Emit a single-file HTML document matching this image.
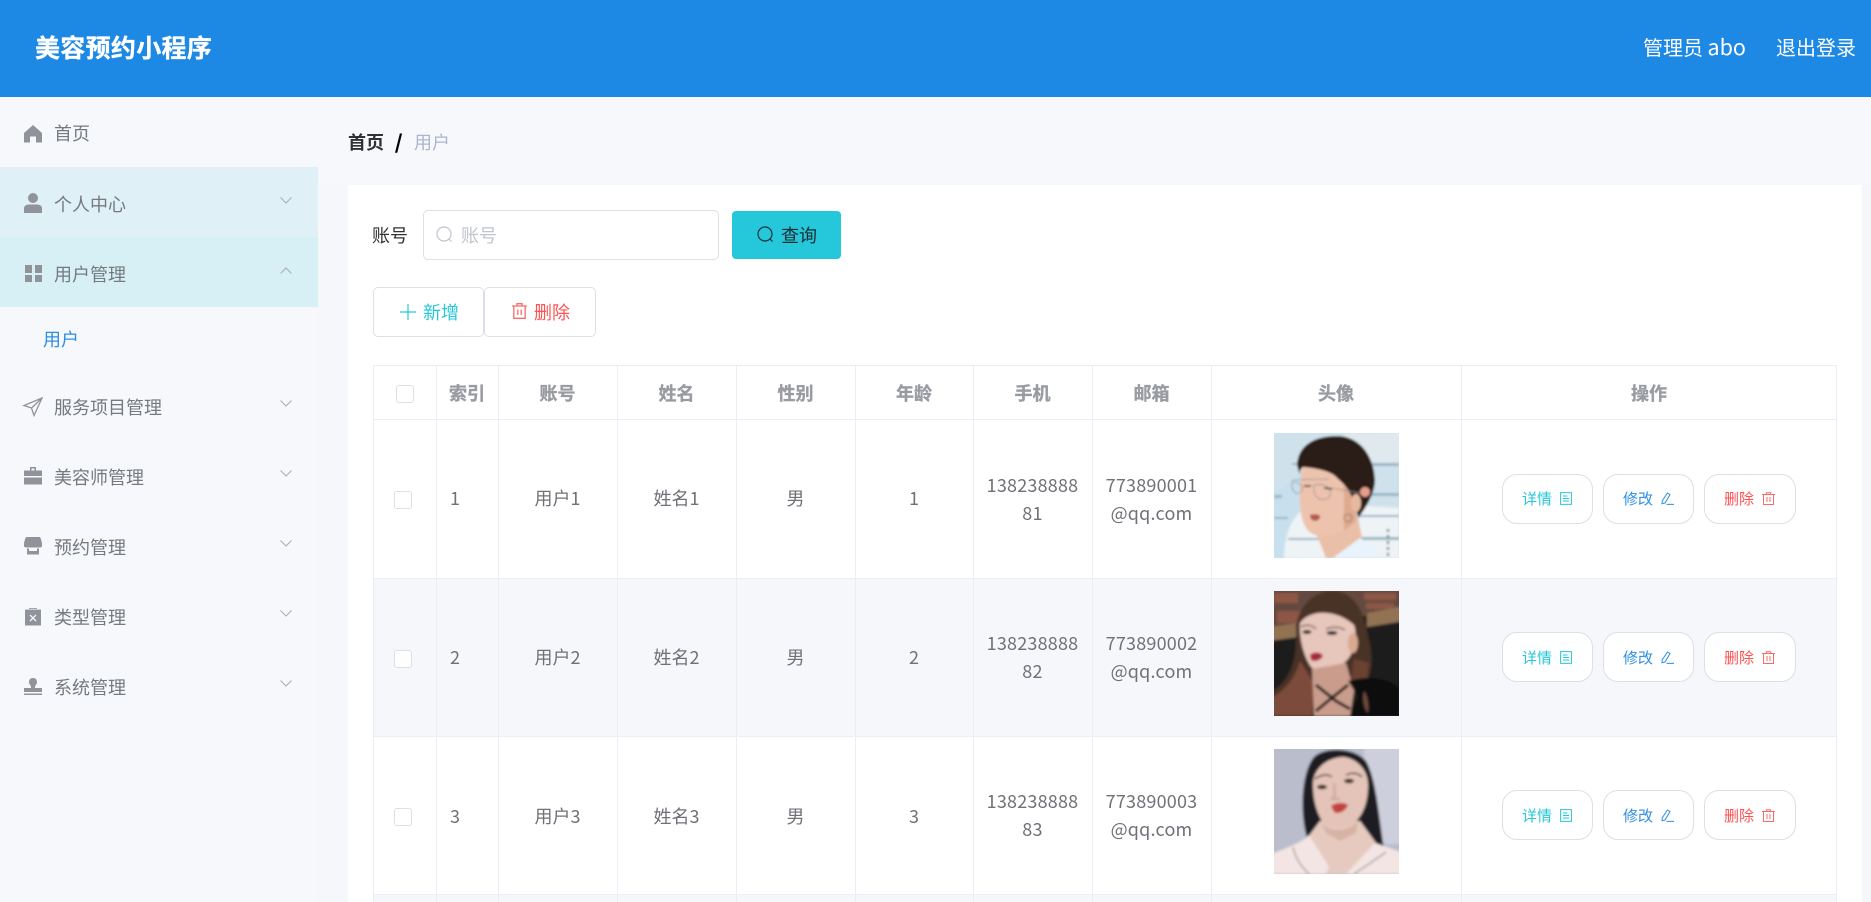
<!DOCTYPE html>
<html lang="zh-CN">
<head>
<meta charset="utf-8">
<title>美容预约小程序</title>
<style>
*{box-sizing:border-box;margin:0;padding:0}
html,body{width:1871px;height:902px;overflow:hidden;background:#f5f7fb}
body{position:relative;font-family:"Noto Sans CJK SC","Liberation Sans",sans-serif;color:#606266;font-size:18px;font-weight:400}
.a{position:absolute}
.t{position:absolute;white-space:nowrap;line-height:28px;height:28px}
.c{position:absolute;text-align:center;white-space:nowrap;line-height:28px}
svg{position:absolute;display:block;overflow:visible}
.hdr{left:0;top:0;width:1871px;height:97px;background:#1e88e5}
.side{left:0;top:97px;width:318px;height:805px;background:#f6f8fb}
.m{position:absolute;left:54px;font-size:18px;color:#757a80;line-height:28px;white-space:nowrap}
.ic{fill:#909399}
.ch{fill:none;stroke:#a9adb3;stroke-width:1}
.panel{left:348px;top:185px;width:1514px;height:717px;background:#fff}
.vl{position:absolute;top:0;width:1px;background:#ebeef5}
.btn{position:absolute;height:50px;border:1px solid #dcdfe6;background:#fff}
.th{position:absolute;top:368px;height:50px;line-height:50px;text-align:center;font-weight:700;font-size:18px;color:#989ba1;white-space:nowrap;-webkit-text-stroke:.35px #989ba1}
.row{position:absolute;left:373px;width:1464px}
.rb{position:absolute;top:55px;width:91px;height:50px;border:1px solid #dcdfe6;border-radius:15px;background:#fff}
.row .c{color:#6f7177;font-size:18px}
.row .n{letter-spacing:.2px}
.cb{position:absolute;width:18px;height:18px;border:1px solid #dcdfe6;border-radius:3px;background:#fff}
.lb{position:absolute;font-size:15px;line-height:22px;white-space:nowrap}
</style>
</head>
<body>

<div class="a" style="left:318px;top:97px;width:1553px;height:88px;background:#f7f8fb"></div>
<div class="a hdr"></div>
<div class="t" style="left:35px;top:29px;height:36px;line-height:36px;font-size:25px;font-weight:700;letter-spacing:.3px;color:#fff;-webkit-text-stroke:.3px #fff">美容预约小程序</div>
<div class="t" style="left:1643px;top:33px;font-size:20px;color:#fff">管理员 <span style="font-size:21.500px">abo</span></div>
<div class="t" style="left:1776px;top:33px;font-size:20px;color:#fff">退出登录</div>

<div class="a side"></div>
<div class="a" style="left:0;top:167px;width:318px;height:70px;background:#dff1f7"></div>
<div class="a" style="left:0;top:237px;width:318px;height:70px;background:#d7f0f5"></div>

<svg width="18" height="18" viewBox="0 0 18 18" style="left:24px;top:125px"><path class="ic" d="M9 0L18 8V17.500H12V11.500H6V17.500H0V8Z"/></svg>
<div class="m" style="top:119px">首页</div>

<svg width="18" height="20" viewBox="0 0 18 20" style="left:24px;top:193px"><circle class="ic" cx="9" cy="5" r="5"/><path class="ic" d="M0 20V15.500C0 13 2 11.500 5 11.500H13C16 11.500 18 13 18 15.500V20Z"/></svg>
<div class="m" style="top:190px">个人中心</div>
<svg width="12" height="7" style="left:280px;top:197px"><path class="ch" d="M.5.500L6 6 11.500.500"/></svg>

<svg width="18" height="18" viewBox="0 0 18 18" style="left:24px;top:265px"><path class="ic" d="M1 0H8V8H1ZM11 0H18V8H11ZM1 10H8V17H1ZM11 10H18V17H11Z"/></svg>
<div class="m" style="top:260px">用户管理</div>
<svg width="12" height="7" style="left:280px;top:267px"><path class="ch" d="M.5 6.500L6 1 11.500 6.500"/></svg>

<div class="m" style="left:43px;top:325px;color:#2d8fe6">用户</div>

<svg width="20" height="20" viewBox="0 0 20 20" style="left:23px;top:397px"><path d="M19 1L1 8.500 8.500 11 11 18.500Z M8.500 11L19 1" fill="none" stroke="#909399" stroke-width="1.300"/></svg>
<div class="m" style="top:393px">服务项目管理</div>
<svg width="12" height="7" style="left:280px;top:400px"><path class="ch" d="M.5.500L6 6 11.500.500"/></svg>

<svg width="18" height="18" viewBox="0 0 18 18" style="left:24px;top:467px"><path class="ic" d="M6 0H12V3.500H18V9H0V3.500H6ZM7.500 1.500V3.500H10.500V1.500ZM0 10.500H18V17.500H0Z"/></svg>
<div class="m" style="top:463px">美容师管理</div>
<svg width="12" height="7" style="left:280px;top:470px"><path class="ch" d="M.5.500L6 6 11.500.500"/></svg>

<svg width="18" height="18" viewBox="0 0 18 18" style="left:24px;top:537px"><path class="ic" d="M2 0H16C17 2 18 5 18 7V9C18 10 17 10.500 16 10.500H2C1 10.500 0 10 0 9V7C0 5 1 2 2 0ZM3 11.500H5V14H13V11.500H15V17.500H3Z"/></svg>
<div class="m" style="top:533px">预约管理</div>
<svg width="12" height="7" style="left:280px;top:540px"><path class="ch" d="M.5.500L6 6 11.500.500"/></svg>

<svg width="16" height="19" viewBox="0 0 16 19" style="left:25px;top:607px"><path class="ic" d="M0 2.500H4V1H12V2.500H16V18.500H0Z"/><path d="M5 8L11 14M11 8L5 14" stroke="#f5f7fb" stroke-width="1.300" fill="none"/><path d="M0 2.200H16" stroke="#f5f7fb" stroke-width=".8"/></svg>
<div class="m" style="top:603px">类型管理</div>
<svg width="12" height="7" style="left:280px;top:610px"><path class="ch" d="M.5.500L6 6 11.500.500"/></svg>

<svg width="18" height="18" viewBox="0 0 18 18" style="left:24px;top:678px"><path class="ic" d="M9 0C11.500 0 13 1.500 13 4C13 6 11.500 7 11 8.500V10H18V14H0V10H7V8.500C6.500 7 5 6 5 4C5 1.500 6.500 0 9 0ZM0 15.500H18V17H0Z"/></svg>
<div class="m" style="top:673px">系统管理</div>
<svg width="12" height="7" style="left:280px;top:680px"><path class="ch" d="M.5.500L6 6 11.500.500"/></svg>

<div class="t" style="left:348px;top:128px;font-weight:700;color:#303133">首页</div>
<div class="t" style="left:395px;top:128px;font-weight:700;font-size:19px;color:#000;-webkit-text-stroke:.4px #000">/</div>
<div class="t" style="left:414px;top:128px;color:#a8b6cf">用户</div>

<div class="a panel"></div>

<div class="t" style="left:372px;top:221px;color:#303133">账号</div>
<div class="a" style="left:423px;top:210px;width:296px;height:50px;border:1px solid #dcdfe6;border-radius:5px;background:#fff"></div>
<svg width="17" height="17" viewBox="0 0 17 17" style="left:436px;top:226px"><circle cx="8" cy="8" r="7" fill="none" stroke="#c0c4cc" stroke-width="1.200"/><path d="M13 13L15.500 15.500" stroke="#c0c4cc" stroke-width="1.200"/></svg>
<div class="t" style="left:461px;top:221px;color:#c0c4cc">账号</div>

<div class="a" style="left:732px;top:211px;width:109px;height:48px;background:#25c7da;border-radius:4px"></div>
<svg width="17" height="17" viewBox="0 0 17 17" style="left:757px;top:226px"><circle cx="8" cy="8" r="7" fill="none" stroke="#14303a" stroke-width="1.200"/><path d="M13 13L15.500 15.500" stroke="#14303a" stroke-width="1.200"/></svg>
<div class="t" style="left:781px;top:221px;color:#1c2b30">查询</div>

<div class="btn" style="left:373px;top:287px;width:111px;border-radius:5px"></div>
<svg width="16" height="16" viewBox="0 0 16 16" style="left:400px;top:304px"><path d="M8 0V16M0 8H16" stroke="#25c7da" stroke-width="1.200"/></svg>
<div class="t" style="left:423px;top:298px;color:#25c7da">新增</div>

<div class="btn" style="left:484px;top:287px;width:112px;border-radius:5px"></div>
<svg width="15" height="16" viewBox="0 0 15 16" style="left:512px;top:303px"><path d="M0 3H15M5 3V.7H10V3M1.800 3V15.300H13.200V3M5.800 6.500V12M9.200 6.500V12" fill="none" stroke="#f56c6c" stroke-width="1.300"/></svg>
<div class="t" style="left:534px;top:298px;color:#ff5151">删除</div>

<!-- table head -->
<div class="a" style="left:373px;top:365px;width:1464px;height:55px;background:#fff;border:1px solid #ebeef5"></div>
<div class="cb" style="left:396px;top:385px"></div>
<div class="th" style="left:436px;width:62px">索引</div>
<div class="th" style="left:498px;width:119px">账号</div>
<div class="th" style="left:617px;width:119px">姓名</div>
<div class="th" style="left:736px;width:119px">性别</div>
<div class="th" style="left:855px;width:118px">年龄</div>
<div class="th" style="left:973px;width:119px">手机</div>
<div class="th" style="left:1092px;width:119px">邮箱</div>
<div class="th" style="left:1211px;width:250px">头像</div>
<div class="th" style="left:1461px;width:376px">操作</div>

<!-- row backgrounds -->
<div class="a" style="left:373px;top:578px;width:1464px;height:158px;background:#f5f7fb"></div>
<div class="a" style="left:373px;top:895px;width:1464px;height:7px;background:#f5f7fb"></div>
<div class="a" style="left:373px;top:578px;width:1464px;height:1px;background:#ebeef5"></div>
<div class="a" style="left:373px;top:736px;width:1464px;height:1px;background:#ebeef5"></div>
<div class="a" style="left:373px;top:894px;width:1464px;height:1px;background:#ebeef5"></div>

<!-- vertical lines -->
<div class="vl" style="left:373px;top:365px;height:537px"></div>
<div class="vl" style="left:436px;top:365px;height:537px"></div>
<div class="vl" style="left:498px;top:365px;height:537px"></div>
<div class="vl" style="left:617px;top:365px;height:537px"></div>
<div class="vl" style="left:736px;top:365px;height:537px"></div>
<div class="vl" style="left:855px;top:365px;height:537px"></div>
<div class="vl" style="left:973px;top:365px;height:537px"></div>
<div class="vl" style="left:1092px;top:365px;height:537px"></div>
<div class="vl" style="left:1211px;top:365px;height:537px"></div>
<div class="vl" style="left:1461px;top:365px;height:537px"></div>
<div class="vl" style="left:1836px;top:365px;height:537px"></div>

<!-- ROW 1 -->
<div class="row" style="top:419px;height:159px">
  <div class="cb" style="left:21px;top:72px"></div>
  <div class="c" style="left:77px;top:65px">1</div>
  <div class="c" style="left:125px;width:119px;top:65px">用户1</div>
  <div class="c" style="left:244px;width:119px;top:65px">姓名1</div>
  <div class="c" style="left:363px;width:119px;top:65px">男</div>
  <div class="c" style="left:482px;width:118px;top:65px">1</div>
  <div class="c n" style="left:600px;width:119px;top:52px">138238888<br>81</div>
  <div class="c n" style="left:719px;width:119px;top:52px">773890001<br>@qq.com</div>
  <svg width="125" height="125" viewBox="0 0 125 125" style="left:901px;top:14px">
    <defs><filter id="b1" x="-10%" y="-10%" width="120%" height="120%"><feGaussianBlur stdDeviation="1.100"/></filter>
    <clipPath id="k1"><rect width="125" height="125"/></clipPath></defs>
    <g clip-path="url(#k1)"><g filter="url(#b1)">
      <rect x="-5" y="-5" width="135" height="135" fill="#cfe2ec"/>
      <rect x="70" y="0" width="60" height="30" fill="#dfe9ee"/>
      <path d="M0 60L30 40 40 125H0Z" fill="#c8e0ee"/>
      <path d="M10 125C10 100 20 70 50 70L125 75V125Z" fill="#eef3f6"/>
      <path d="M90 30H125V33H90ZM95 60H125V63H95ZM85 82H125V84H85ZM18 30H25V32H18ZM0 62H8V65H0ZM0 84H14V86H0ZM14 105H50V107H14ZM80 104H125V107H80Z" fill="#9ab7c3"/>
      <path d="M40 95L84 84 92 125H52Z" fill="#eabfa7"/>
      <path d="M59 125L86 105C96 112 104 118 110 125Z" fill="#e8f3fb"/>
      <path d="M29 30L78 40 84 70 80 90C70 100 50 106 41 102 30 98 27 85 26 72 25 58 26 44 29 30Z" fill="#edc3ad"/>
      <path d="M70 50L84 60 82 88 70 98Z" fill="#dfa98f"/>
      <path d="M23 32C24 14 38 3 63 3 85 3 100 22 101 47 101 60 92 75 84 85L81 70 76 60C72 52 66 48 60 42 52 37 40 35 29 34 26 36 25 40 26 43Z" fill="#2b1c18"/>
      <path d="M36 82C42 80 50 82 44 87 40 89 36 87 36 82Z" fill="#b25a49"/>
      <ellipse cx="82" cy="70" rx="5" ry="9" fill="#e8b9a0"/>
      <circle cx="91" cy="59" r="5" fill="#e79d8d"/>
      <path d="M18 47L55 46M18 49C17 58 22 63 27 59 31 54 26 49 18 49M40 52C38 66 50 70 55 64 60 56 52 50 40 52ZM57 55L86 60" fill="none" stroke="#8a9096" stroke-width=".8"/>
      <path d="M30 53L37 53M50 55L58 56" stroke="#2a2220" stroke-width="1.500"/>
      <circle cx="74" cy="85" r="4" fill="none" stroke="#8a7060" stroke-width=".8"/>
      <path d="M114 96V125" stroke="#7f8f98" stroke-width="2.500" stroke-dasharray="3 3"/>
    </g></g>
  </svg>
  <div class="rb" style="left:1129px"></div>
  <div class="rb" style="left:1230px"></div>
  <div class="rb" style="left:1331px;width:92px"></div>
  <div class="lb" style="left:1149px;top:69px;color:#25c7da">详情</div>
  <svg width="12" height="13" viewBox="0 0 12 13" style="left:1187px;top:73px"><path d="M.6.6H11.400V12.400H.6ZM3 4H7.500M3 6.500H9M3 9H9" fill="none" stroke="#25c7da" stroke-width="1"/></svg>
  <div class="lb" style="left:1250px;top:69px;color:#2d8fe6">修改</div>
  <svg width="13" height="13" viewBox="0 0 13 13" style="left:1288px;top:73px"><path d="M6.500 1L9 2.500 4 11 1 11.700 1.300 8.700ZM5.500 12.400H13" fill="none" stroke="#2d8fe6" stroke-width="1"/></svg>
  <div class="lb" style="left:1351px;top:69px;color:#ff5151">删除</div>
  <svg width="13" height="13" viewBox="0 0 13 13" style="left:1389px;top:73px"><path d="M0 2.500H13M4.300 2.500V.7H8.700V2.500M1.500 2.500V12.500H11.500V2.500M5 5V10M8 5V10" fill="none" stroke="#f56c6c" stroke-width="1"/></svg>
</div>

<!-- ROW 2 -->
<div class="row" style="top:578px;height:158px">
  <div class="cb" style="left:21px;top:72px"></div>
  <div class="c" style="left:77px;top:65px">2</div>
  <div class="c" style="left:125px;width:119px;top:65px">用户2</div>
  <div class="c" style="left:244px;width:119px;top:65px">姓名2</div>
  <div class="c" style="left:363px;width:119px;top:65px">男</div>
  <div class="c" style="left:482px;width:118px;top:65px">2</div>
  <div class="c n" style="left:600px;width:119px;top:51px">138238888<br>82</div>
  <div class="c n" style="left:719px;width:119px;top:51px">773890002<br>@qq.com</div>
  <svg width="125" height="125" viewBox="0 0 125 125" style="left:901px;top:13px">
    <defs><filter id="b2" x="-10%" y="-10%" width="120%" height="120%"><feGaussianBlur stdDeviation="1.200"/></filter>
    <clipPath id="k2"><rect width="125" height="125"/></clipPath></defs>
    <g clip-path="url(#k2)"><g filter="url(#b2)">
      <rect x="-5" y="-5" width="135" height="135" fill="#1e1f1e"/>
      <path d="M-5 -5H130V20L-5 38Z" fill="#63493f"/>
      <path d="M0 2H24V12H0ZM3 20H28V32H3ZM90 2H122V9H90ZM92 12H120V18H92Z" fill="#8e5644"/>
      <path d="M-5 36L24 32V46L-5 50ZM93 22L130 15V30L93 36Z" fill="#917353"/>
      <path d="M-5 125V102C15 92 24 72 22 35 26 12 42 0 58 0 80 0 90 20 94 45 98 60 100 78 92 92L60 110 35 125Z" fill="#4a3028"/>
      <path d="M-5 125V108C12 100 22 85 26 70L40 92 38 125Z" fill="#7b4b3b"/>
      <path d="M80 68L95 72 92 96 76 98Z" fill="#6a4232"/>
      <path d="M26 32C36 18 62 18 80 34 84 46 80 60 74 68 62 82 46 84 37 76 29 64 25 46 26 32Z" fill="#e7c6bc"/>
      <ellipse cx="79" cy="52" rx="5" ry="10" fill="#d9a990"/>
      <path d="M38 78L72 72 80 100 76 125H40Z" fill="#c99c8c"/>
      <path d="M74 90C95 84 115 87 125 97V125H76L84 105Z" fill="#0e0b0f"/>
      <path d="M90 100C94 105 95 115 94 122 90 118 88 108 90 100Z" fill="#6e4a3e"/>
      <path d="M42 94L62 110 76 118M74 94L54 110 42 120" fill="none" stroke="#120d10" stroke-width="3"/>
      <path d="M27 36C32 33 38 34 42 38M52 38C60 35 66 36 71 39" stroke="#5a4038" stroke-width="1.300" fill="none"/>
      <ellipse cx="33" cy="41" rx="4.500" ry="2" fill="#2a1a18"/><ellipse cx="58" cy="42" rx="5.500" ry="2" fill="#2a1a18"/>
      <path d="M36 64C40 60 47 61 49 65 46 70 40 71 37 69Z" fill="#a42c3a"/>
    </g></g>
  </svg>
  <div class="rb" style="left:1129px;top:54px"></div>
  <div class="rb" style="left:1230px;top:54px"></div>
  <div class="rb" style="left:1331px;top:54px;width:92px"></div>
  <div class="lb" style="left:1149px;top:69px;color:#25c7da">详情</div>
  <svg width="12" height="13" viewBox="0 0 12 13" style="left:1187px;top:73px"><path d="M.6.6H11.400V12.400H.6ZM3 4H7.500M3 6.500H9M3 9H9" fill="none" stroke="#25c7da" stroke-width="1"/></svg>
  <div class="lb" style="left:1250px;top:69px;color:#2d8fe6">修改</div>
  <svg width="13" height="13" viewBox="0 0 13 13" style="left:1288px;top:73px"><path d="M6.500 1L9 2.500 4 11 1 11.700 1.300 8.700ZM5.500 12.400H13" fill="none" stroke="#2d8fe6" stroke-width="1"/></svg>
  <div class="lb" style="left:1351px;top:69px;color:#ff5151">删除</div>
  <svg width="13" height="13" viewBox="0 0 13 13" style="left:1389px;top:73px"><path d="M0 2.500H13M4.300 2.500V.7H8.700V2.500M1.500 2.500V12.500H11.500V2.500M5 5V10M8 5V10" fill="none" stroke="#f56c6c" stroke-width="1"/></svg>
</div>

<!-- ROW 3 -->
<div class="row" style="top:736px;height:158px">
  <div class="cb" style="left:21px;top:72px"></div>
  <div class="c" style="left:77px;top:66px">3</div>
  <div class="c" style="left:125px;width:119px;top:66px">用户3</div>
  <div class="c" style="left:244px;width:119px;top:66px">姓名3</div>
  <div class="c" style="left:363px;width:119px;top:66px">男</div>
  <div class="c" style="left:482px;width:118px;top:66px">3</div>
  <div class="c n" style="left:600px;width:119px;top:51px">138238888<br>83</div>
  <div class="c n" style="left:719px;width:119px;top:51px">773890003<br>@qq.com</div>
  <svg width="125" height="125" viewBox="0 0 125 125" style="left:901px;top:13px">
    <defs><filter id="b3" x="-10%" y="-10%" width="120%" height="120%"><feGaussianBlur stdDeviation="1.200"/></filter>
    <clipPath id="k3"><rect width="125" height="125"/></clipPath></defs>
    <g clip-path="url(#k3)"><g filter="url(#b3)">
      <rect x="-5" y="-5" width="135" height="135" fill="#b9bdcc"/>
      <rect x="90" y="-5" width="40" height="100" fill="#cdd0dc"/>
      <path d="M34 92C26 70 26 25 40 8 50 -2 80 -2 92 12 102 30 104 60 110 100L60 95 24 100C28 98 32 96 34 92Z" fill="#1b1b24"/>
      <path d="M46 72H86L102 94 72 125H50L34 88Z" fill="#e6cabf"/>
      <path d="M39 34C40 18 55 8 70 8 84 10 94 22 94 36 94 55 88 68 78 76 68 82 55 80 48 72 41 60 39 48 39 34Z" fill="#e4c4b8"/>
      <path d="M46 72C54 84 74 84 84 72L82 84 66 92 52 84Z" fill="#d7b3a5"/>
      <path d="M-5 125V106C16 98 30 92 35 86L55 118 52 125ZM101 94L130 104V125H72Z" fill="#f3e5e3"/>
      <path d="M19 98C22 112 30 120 35 125M112 103C100 112 90 118 80 125" stroke="#7a6660" stroke-width=".9" fill="none"/>
      <path d="M41 30C48 25 54 25 58 28M72 26C78 23 84 24 88 28" stroke="#3a2a28" stroke-width="1.400" fill="none"/>
      <ellipse cx="48" cy="38" rx="5" ry="2.300" fill="#3c2522"/><ellipse cx="75" cy="32" rx="5" ry="2.300" fill="#3c2522"/>
      <path d="M60 34L61 46 58 50H66" stroke="#cda499" stroke-width="2" fill="none"/>
      <path d="M57 57C62 53 70 53 74 56 72 62 64 66 60 63Z" fill="#c4433c"/>
    </g></g>
  </svg>
  <div class="rb" style="left:1129px;top:54px"></div>
  <div class="rb" style="left:1230px;top:54px"></div>
  <div class="rb" style="left:1331px;top:54px;width:92px"></div>
  <div class="lb" style="left:1149px;top:69px;color:#25c7da">详情</div>
  <svg width="12" height="13" viewBox="0 0 12 13" style="left:1187px;top:73px"><path d="M.6.6H11.400V12.400H.6ZM3 4H7.500M3 6.500H9M3 9H9" fill="none" stroke="#25c7da" stroke-width="1"/></svg>
  <div class="lb" style="left:1250px;top:69px;color:#2d8fe6">修改</div>
  <svg width="13" height="13" viewBox="0 0 13 13" style="left:1288px;top:73px"><path d="M6.500 1L9 2.500 4 11 1 11.700 1.300 8.700ZM5.500 12.400H13" fill="none" stroke="#2d8fe6" stroke-width="1"/></svg>
  <div class="lb" style="left:1351px;top:69px;color:#ff5151">删除</div>
  <svg width="13" height="13" viewBox="0 0 13 13" style="left:1389px;top:73px"><path d="M0 2.500H13M4.300 2.500V.7H8.700V2.500M1.500 2.500V12.500H11.500V2.500M5 5V10M8 5V10" fill="none" stroke="#f56c6c" stroke-width="1"/></svg>
</div>

</body>
</html>
